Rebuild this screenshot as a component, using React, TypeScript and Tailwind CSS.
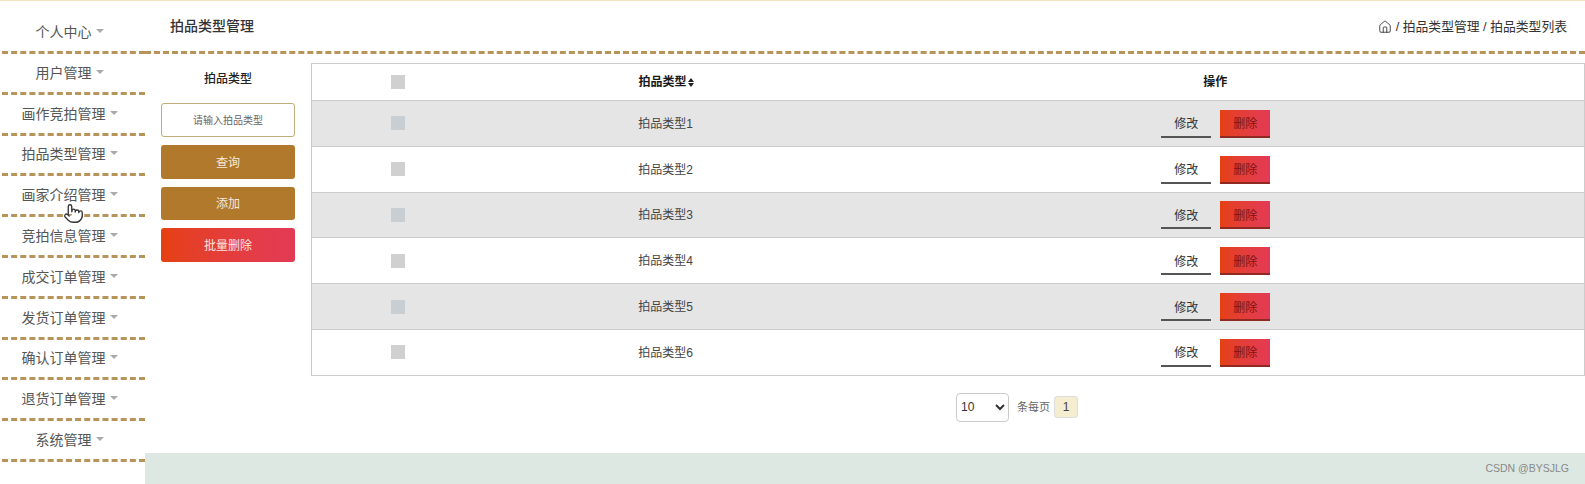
import { House, Pointer } from 'lucide-react'

const MENU_ITEMS = [
  '个人中心',
  '用户管理',
  '画作竞拍管理',
  '拍品类型管理',
  '画家介绍管理',
  '竞拍信息管理',
  '成交订单管理',
  '发货订单管理',
  '确认订单管理',
  '退货订单管理',
  '系统管理',
]

const ROWS = ['拍品类型1', '拍品类型2', '拍品类型3', '拍品类型4', '拍品类型5', '拍品类型6']

const Sidebar = () => (
  <ul className="relative flex w-[145px] shrink-0 flex-col pl-[2px]">
    {MENU_ITEMS.map((item, i) => (
      <li
        key={item}
        className={`flex items-center justify-center gap-[4px] border-b-[3px] border-dashed border-[#b8935a] pr-[8px] text-[14px] text-[#555555] ${
          i === 0 ? 'h-[53px] pt-[12px]' : 'h-[40.8px] pt-[1px]'
        }`}
      >
        <span>{item}</span>
        <span className="mb-[3px] h-0 w-0 border-x-[4px] border-t-[4px] border-x-transparent border-t-[#aaaaaa]" />
      </li>
    ))}
    <Pointer
      className="absolute left-[63px] top-[202px] fill-white text-[#333333]"
      size={21}
      strokeWidth={1.5}
    />
  </ul>
)

const SearchPanel = () => (
  <div className="flex w-[166px] shrink-0 flex-col gap-[8px] pl-[16px]">
    <div className="flex h-[33px] w-[134px] items-start justify-center pt-[8px] text-[12px] font-medium leading-[16px] text-[#222222]">
      拍品类型
    </div>
    <div className="mt-[-1px] flex h-[34px] w-[134px] items-center justify-center rounded-[3px] border border-[#c2ab7c] bg-white text-[10px] text-[#666666]">
      请输入拍品类型
    </div>
    <button className="h-[33.5px] w-[134px] rounded-[3px] bg-[#b1792b] pt-[2px] text-[12px] text-[#f5eadb]">查询</button>
    <button className="h-[33.5px] w-[134px] rounded-[3px] bg-[#b1792b] pt-[2px] text-[12px] text-[#f5eadb]">添加</button>
    <button className="h-[33.5px] w-[134px] rounded-[3px] bg-gradient-to-r from-[#e5400f] to-[#e33a55] pt-[2px] text-[12px] text-[#fbe6e0]">
      批量删除
    </button>
  </div>
)

const TypeTable = () => (
  <table className="w-full table-fixed border-collapse border border-[#cccccc] text-[12px] text-[#444444]">
    <colgroup>
      <col className="w-[173px]" />
      <col className="w-[362px]" />
      <col />
    </colgroup>
    <thead>
      <tr className="h-[37px] border-b border-[#cccccc] font-bold text-[#1a1a1a]">
        <th className="font-bold">
          <span className="mx-auto block h-[14px] w-[14px] bg-[#d0d0d0]" />
        </th>
        <th className="pl-[1px] font-bold">
          <span className="inline-flex items-center gap-[1px]">
            拍品类型
            <span className="flex flex-col gap-[1px]">
              <span className="h-0 w-0 border-x-[3.5px] border-b-[4px] border-x-transparent border-b-[#222222]" />
              <span className="h-0 w-0 border-x-[3.5px] border-t-[4px] border-x-transparent border-t-[#222222]" />
            </span>
          </span>
        </th>
        <th className="font-bold">操作</th>
      </tr>
    </thead>
    <tbody>
      {ROWS.map((row, i) => (
        <tr key={row} className={`h-[45.8px] border-b border-[#cccccc] ${i % 2 === 0 ? 'bg-[#e5e5e5]' : 'bg-white'}`}>
          <td>
            <span className={`mx-auto block h-[14px] w-[14px] ${i % 2 === 0 ? 'bg-[#c9ced3]' : 'bg-[#d0d0d0]'}`} />
          </td>
          <td className="pt-[1px] text-center">{row}</td>
          <td>
            <div className="flex items-center justify-center gap-[9px] pl-[1px] pt-[1px]">
              <button className="h-[28px] w-[50px] border-b-2 border-[#555555] pt-[3px] text-[12px] text-[#333333]">修改</button>
              <button className="h-[28px] w-[50px] border-b-2 border-[#8f2a22] bg-gradient-to-r from-[#e5400f] to-[#e33a55] pt-[3px] text-[12px] text-[#7d1414]">
                删除
              </button>
            </div>
          </td>
        </tr>
      ))}
    </tbody>
  </table>
)

const Pagination = () => (
  <div className="flex items-center pl-[811px] pt-[17px] text-[11px] text-[#666666]">
    <select className="h-[29px] w-[53px] rounded-[4px] border border-[#cccccc] bg-white text-[12px] text-[#333333]">
      <option>10</option>
    </select>
    <span className="ml-[8px]">条每页</span>
    <span className="ml-[4px] flex h-[22px] w-[24px] items-center justify-center rounded-[3px] border border-[#dddddd] bg-[#f5edcf] text-[12px] text-[#444444]">
      1
    </span>
  </div>
)

export default function App() {
  return (
    <div className="flex h-[484px] w-full flex-col overflow-hidden bg-white font-['Liberation_Sans','Noto_Sans_CJK_SC',sans-serif]">
      <div className="h-px shrink-0 bg-[#f5e6c0]" />
      <div className="flex min-h-0 flex-1">
        <Sidebar />
        <main className="flex min-w-0 flex-1 flex-col">
          <header className="flex h-[53px] shrink-0 items-center justify-between border-b-[3px] border-dashed border-[#b8935a] pl-[25px] pr-[18px] pt-[1px]">
            <h1 className="text-[14px] font-medium text-[#333333]">拍品类型管理</h1>
            <div className="flex items-center gap-[4px] text-[12.8px] text-[#333333]">
              <House size={14} strokeWidth={1.5} />
              <span>/ 拍品类型管理 / 拍品类型列表</span>
            </div>
          </header>
          <div className="flex pt-[9px]">
            <SearchPanel />
            <div className="min-w-0 flex-1">
              <TypeTable />
            </div>
          </div>
          <Pagination />
          <footer className="mt-auto flex h-[31px] shrink-0 items-center justify-end bg-[#dde8e3] pr-[16px] text-[10.5px] text-[#888888]">
            CSDN @BYSJLG
          </footer>
        </main>
      </div>
    </div>
  )
}
